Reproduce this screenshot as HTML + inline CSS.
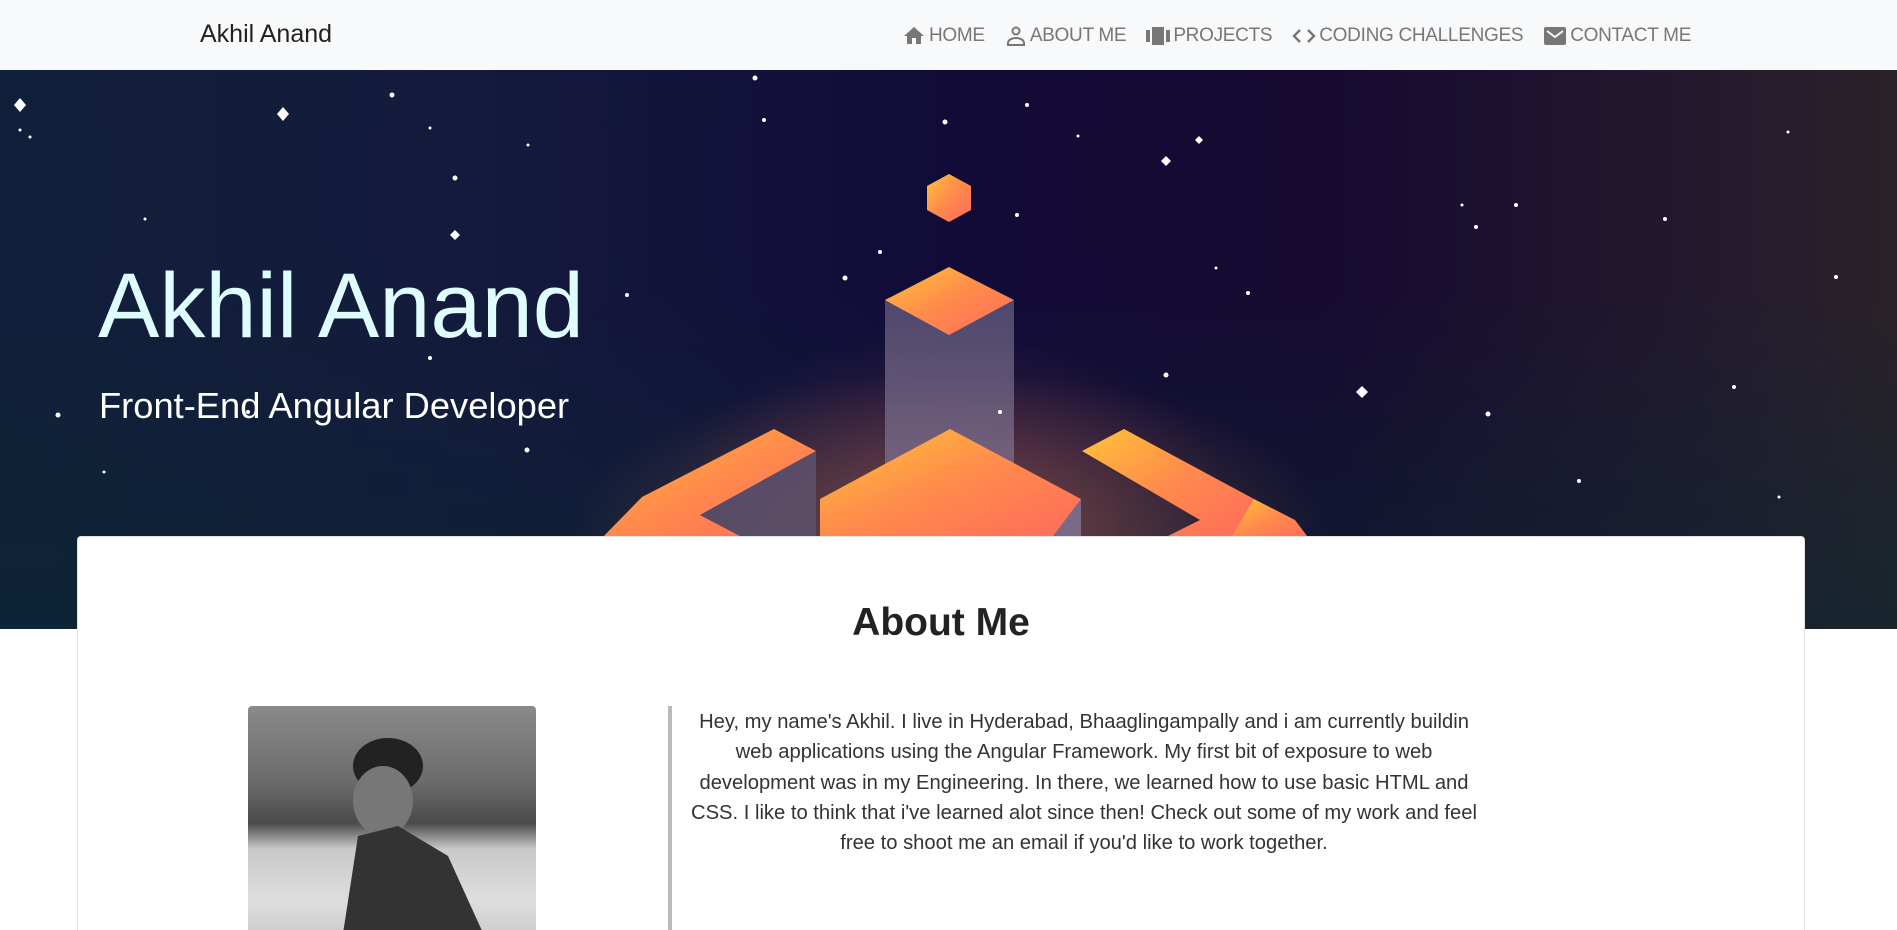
<!DOCTYPE html>
<html><head><meta charset="utf-8">
<style>
*{margin:0;padding:0;box-sizing:border-box}
html,body{width:1897px;height:930px;overflow:hidden}
body{background:#fff;font-family:"Liberation Sans",sans-serif;position:relative}
nav{position:absolute;left:0;top:0;width:1897px;height:70px;background:#f8f9fa}
.brand{position:absolute;left:200px;top:20px;font-size:25px;color:#222}
.menu{position:absolute;top:24px;left:901px;display:flex;font-size:19px;color:#777;letter-spacing:-0.3px}
.menu span{display:flex;align-items:center;margin-right:19px;height:24px}
.menu svg{margin-right:2px}
.hero{position:absolute;left:0;top:70px;width:1897px;height:559px;overflow:hidden;
background:radial-gradient(ellipse 420px 300px at 950px 470px,rgba(150,60,90,.55),rgba(60,20,70,0) 70%),
linear-gradient(90deg,#11203a 0%,#141a3c 25%,#120b38 50%,#160a30 70%,#231a2e 90%,#2a2228 100%)}
.hero:before{content:"";position:absolute;inset:0;background:linear-gradient(180deg,rgba(0,0,0,0) 40%,rgba(10,40,50,.55) 100%);}
h1{position:absolute;left:98px;top:184px;font-size:92px;font-weight:normal;color:#dffcff}
h2{position:absolute;left:99px;top:315px;font-size:36.3px;font-weight:normal;color:#fff}
.card{position:absolute;left:77px;top:536px;width:1728px;height:420px;background:#fff;border:1px solid #e2e2e2;border-radius:4px}
.card h3{position:absolute;left:0;width:100%;top:64px;text-align:center;font-size:39px;font-weight:bold;color:#222}
.photo{position:absolute;left:170px;top:169px;width:288px;height:260px;border-radius:4px;overflow:hidden;
background:linear-gradient(180deg,#8a8a8a 0%,#6a6a6a 30%,#4a4a4a 45%,#c9c9c9 55%,#dedede 75%,#bbb 100%)}
.vline{position:absolute;left:590px;top:169px;width:4px;height:260px;background:#bbb}
.txt{position:absolute;left:610px;top:170px;width:792px;text-align:center;font-size:20.2px;line-height:30.3px;color:#333}
</style></head><body>
<nav>
<div class="brand">Akhil Anand</div>
<div class="menu">
<span><svg width="26" height="24" viewBox="0 0 24 24"><path fill="#777" d="M10 20v-6h4v6h5v-8h3L12 3 2 12h3v8z"/></svg>HOME</span>
<span><svg width="24" height="24" viewBox="0 0 24 24"><circle cx="12" cy="7" r="3.5" fill="none" stroke="#777" stroke-width="2"/><path d="M4 21v-2c0-3 4-5 8-5s8 2 8 5v2z" fill="none" stroke="#777" stroke-width="2"/></svg>ABOUT ME</span>
<span><svg width="26" height="24" viewBox="0 0 26 24"><rect x="1" y="6" width="4" height="12" fill="#777"/><rect x="7" y="3" width="12" height="18" fill="#777"/><rect x="21" y="6" width="4" height="12" fill="#777"/></svg>PROJECTS</span>
<span><svg width="26" height="24" viewBox="0 0 26 24"><path d="M9 6l-6 6 6 6M17 6l6 6-6 6" fill="none" stroke="#777" stroke-width="2.4"/></svg>CODING CHALLENGES</span>
<span><svg width="26" height="24" viewBox="0 0 24 24"><rect x="1" y="3" width="22" height="18" rx="2" fill="#777"/><path d="M4 7l8 6 8-6" fill="none" stroke="#f8f9fa" stroke-width="2"/></svg>CONTACT ME</span>
</div>
</nav>
<div class="hero">
<svg width="1897" height="629" style="position:absolute;left:0;top:-70px">
<defs>
<linearGradient id="o" x1="0" y1="0" x2="1" y2="1"><stop offset="0" stop-color="#ffc43a"/><stop offset=".5" stop-color="#ff8a4c"/><stop offset="1" stop-color="#ff6a5c"/></linearGradient>
<linearGradient id="p" x1="0" y1="0" x2="0" y2="1"><stop offset="0" stop-color="#5a5276"/><stop offset="1" stop-color="#7a6a86"/></linearGradient>
<radialGradient id="g" cx=".5" cy=".5" r=".5"><stop offset="0" stop-color="rgba(255,140,80,.35)"/><stop offset="1" stop-color="rgba(255,140,80,0)"/></radialGradient>
</defs>
<ellipse cx="950" cy="530" rx="380" ry="160" fill="url(#g)"/>
<polygon points="949,174 971,186 971,210 949,222 927,210 927,186" fill="url(#o)"/>
<polygon points="885,300 1014,300 1014,470 885,470" fill="url(#p)" opacity=".85"/>
<polygon points="949,267 1014,300 949,335 885,300" fill="url(#o)"/>
<polygon points="950,429 1081,499 1081,540 820,540 820,499" fill="url(#o)"/>
<polygon points="1081,499 1081,540 1050,540" fill="#7a6a86"/>
<polygon points="774,429 816,451 700,515 740,536 700,540 600,540 642,497" fill="url(#o)"/>
<polygon points="816,451 816,540 740,536 700,515" fill="#5f5470" opacity=".8"/>
<polygon points="1124,429 1254,499 1254,540 1160,540 1200,520 1082,451" fill="url(#o)"/>
<polygon points="1254,499 1295,520 1310,540 1230,540" fill="url(#o)"/>
<g fill="#fff">
<polygon points="20,98 26,105 20,112 14,105"/><polygon points="283,107 289,114 283,121 277,114"/>
<polygon points="455,230 460,235 455,240 450,235"/><polygon points="1166,156 1171,161 1166,166 1161,161"/>
<polygon points="1362,386 1368,392 1362,398 1356,392"/><polygon points="1199,136 1203,140 1199,144 1195,140"/>
<circle cx="392" cy="95" r="2.5"/><circle cx="430" cy="128" r="1.5"/><circle cx="528" cy="145" r="1.5"/><circle cx="145" cy="219" r="1.5"/>
<circle cx="455" cy="178" r="2.5"/><circle cx="755" cy="78" r="2.5"/><circle cx="764" cy="120" r="2"/><circle cx="945" cy="122" r="2.5"/>
<circle cx="1027" cy="105" r="2"/><circle cx="1017" cy="215" r="2"/><circle cx="880" cy="252" r="2"/><circle cx="845" cy="278" r="2.5"/>
<circle cx="627" cy="295" r="2"/><circle cx="430" cy="358" r="2"/><circle cx="58" cy="415" r="2.5"/><circle cx="104" cy="472" r="1.5"/>
<circle cx="527" cy="450" r="2.5"/><circle cx="1216" cy="268" r="1.5"/><circle cx="1248" cy="293" r="2"/><circle cx="1166" cy="375" r="2.5"/>
<circle cx="1462" cy="205" r="1.5"/><circle cx="1476" cy="227" r="2"/><circle cx="1516" cy="205" r="2"/><circle cx="1665" cy="219" r="2"/>
<circle cx="1788" cy="132" r="1.5"/><circle cx="1836" cy="277" r="2"/><circle cx="1734" cy="387" r="2"/><circle cx="1488" cy="414" r="2.5"/>
<circle cx="1579" cy="481" r="2"/><circle cx="1779" cy="497" r="1.5"/><circle cx="20" cy="130" r="1.5"/><circle cx="30" cy="137" r="1.5"/>
<circle cx="248" cy="412" r="2"/><circle cx="1000" cy="412" r="2"/><circle cx="1078" cy="136" r="1.5"/>
</g>
</svg>
<h1>Akhil Anand</h1>
<h2>Front-End Angular Developer</h2>
</div>
<div class="card">
<h3>About Me</h3>
<div class="photo">
<svg width="288" height="260" style="position:absolute;left:0;top:0">
<ellipse cx="140" cy="60" rx="35" ry="28" fill="#222"/>
<ellipse cx="135" cy="95" rx="30" ry="35" fill="#777"/>
<polygon points="90,260 110,130 150,120 200,150 250,260" fill="#333"/>
</svg>
</div>
<div class="vline"></div>
<div class="txt">Hey, my name's Akhil. I live in Hyderabad, Bhaaglingampally and i am currently buildin web applications using the Angular Framework. My first bit of exposure to web development was in my Engineering. In there, we learned how to use basic HTML and CSS. I like to think that i've learned alot since then! Check out some of my work and feel free to shoot me an email if you'd like to work together.</div>
</div>
</body></html>
